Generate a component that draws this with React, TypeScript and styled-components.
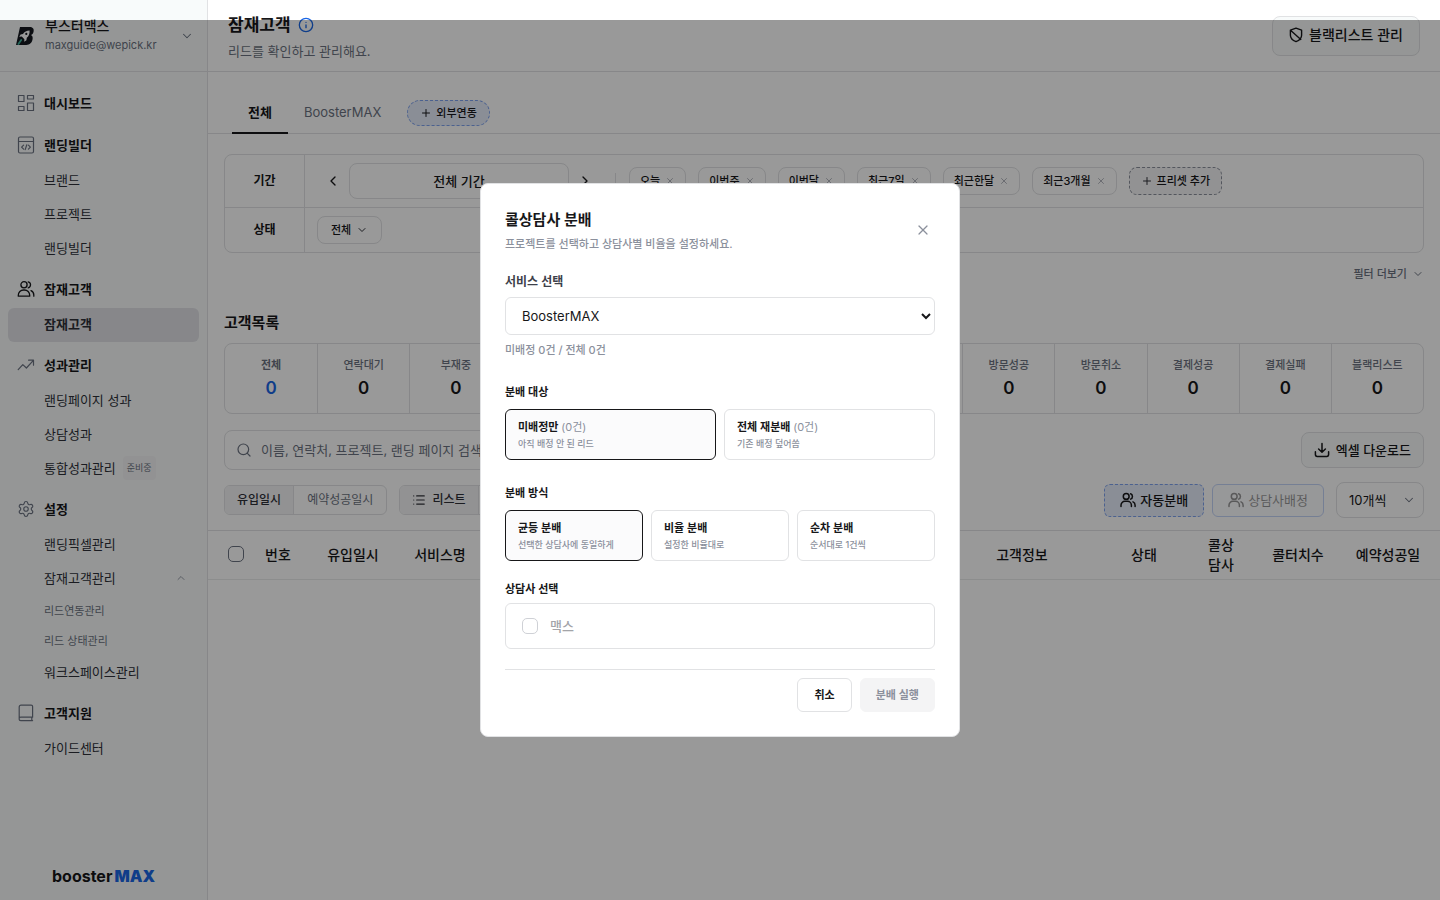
import React from "react";
import styled, { createGlobalStyle, css } from "styled-components";
import {
  ChevronDown,
  ChevronLeft,
  ChevronRight,
  ChevronUp,
  Info,
  List,
  Plus,
  Search,
  Settings,
  X,
} from "lucide-react";

const color = {
  ink: "#171719",
  text: "#2e3038",
  gray: "#6b7280",
  muted: "#8b909c",
  line: "#e1e2e4",
  lineSoft: "#eaebec",
  side: "#f8fbfb",
  active: "#e1e2e6",
  soft: "#f4f4f5",
  blue: "#1a66e5",
  blueLine: "#7ea2ee",
  blueSoft: "#e6edfb",
};

const GlobalStyle = createGlobalStyle`
  *, *::before, *::after { box-sizing: border-box; }
  body {
    margin: 0;
    background: #fff;
    color: ${color.ink};
    font-family: Inter, "Noto Sans CJK KR", sans-serif;
    font-size: 13px;
    line-height: 20px;
  }
  button, input, select { font: inherit; color: inherit; margin: 0; }
  button { cursor: pointer; }
  h1, h2, p, ul { margin: 0; padding: 0; }
  ul { list-style: none; }
  a { color: inherit; text-decoration: none; }
  svg { flex: none; }
`;

/* ---------- icons ---------- */

const iconBase = {
  fill: "none",
  stroke: "currentColor",
  strokeLinecap: "round" as const,
  strokeLinejoin: "round" as const,
  "aria-hidden": true,
};

const DashboardIcon = () => (
  <svg width="18" height="18" viewBox="0 0 18 18" {...iconBase} strokeWidth="1.2">
    <path d="M1.5 1.5H7v6H1.5zM10.5 1.5h6V5h-6zM1.5 12.500H7v4H1.5zM10.500 9h6v7.500h-6z" />
  </svg>
);

const CodeWindowIcon = () => (
  <svg width="18" height="18" viewBox="0 0 18 18" {...iconBase} strokeWidth="1.2">
    <rect x="1.5" y="1" width="15" height="16" rx="1.5" />
    <path d="M1.5 5.5h15M6.6 9.2 4.6 11.2l2 2M11.4 9.2l2 2-2 2M9.8 8.8l-1.6 4.8" />
  </svg>
);

const PeopleIcon = () => (
  <svg width="18" height="18" viewBox="0 0 18 18" {...iconBase} strokeWidth="1.3">
    <circle cx="7" cy="4.8" r="3.1" />
    <path d="M1.3 16.2v-1a5.2 5.2 0 0 1 5.2-5.2h1a5.2 5.2 0 0 1 5.2 5.2v1zM11.2 1.8a3.1 3.1 0 0 1 0 6M14 10.6c1.7.8 2.8 2.5 2.8 4.4v1.2" />
  </svg>
);

const AssignIcon = () => (
  <svg width="16" height="16" viewBox="0 0 16 16" {...iconBase} strokeWidth="1.5">
    <circle cx="6.2" cy="4.4" r="2.9" />
    <path d="M1 14.6v-1.4a3.9 3.9 0 0 1 3.9-3.9h2.6a3.9 3.9 0 0 1 3.9 3.9v1.4M10.6 1.7a2.9 2.9 0 0 1 0 5.4M13 9.9a3.6 3.6 0 0 1 2.1 3.3v1.4" />
  </svg>
);

const TrendIcon = () => (
  <svg width="18" height="18" viewBox="0 0 18 18" {...iconBase} strokeWidth="1.2">
    <path d="m1.2 13.6 4.6-5 3.6 3.4 7-7.600M11.600 4.200h4.900v5" />
  </svg>
);

const BookIcon = () => (
  <svg width="18" height="18" viewBox="0 0 18 18" {...iconBase} strokeWidth="1.2">
    <path d="M15.6 13.2V2.6a1.4 1.4 0 0 0-1.400-1.400H4A1.800 1.800 0 0 0 2.200 3v11.600M15.600 13.200H3.800a1.600 1.600 0 0 0 0 3.400h11.800M14.800 13.200v3.400" />
  </svg>
);

const ShieldOffIcon = () => (
  <svg width="14" height="16" viewBox="0 0 14 16" {...iconBase} strokeWidth="1.4">
    <path d="M7 1.2 12.6 3.2v5c0 3.2-2.4 5.2-5.6 6.4-3.2-1.2-5.6-3.2-5.6-6.4v-5zM1.8 3.4l10 9" />
  </svg>
);

const DownloadIcon = () => (
  <svg width="16" height="16" viewBox="0 0 16 16" {...iconBase} strokeWidth="1.5">
    <path d="M8 1.5v8.600M4.600 7 8 10.300 11.400 7M1.400 9.800v2.800A1.800 1.800 0 0 0 3.200 14.400h9.600a1.800 1.800 0 0 0 1.800-1.800V9.800" />
  </svg>
);

const WorkspaceMark = () => (
  <svg width="20" height="20" viewBox="0 0 20 20" aria-hidden="true">
    <path fill="#15181f" d="M5 1h9.600c3 0 4.600 1.800 4 4.400-.3 1.700-1.100 2.900-2.600 3.700 1.400.8 1.900 2.100 1.600 4C17.100 16.600 14.800 19 11.200 19H1z" />
    <path fill="#fff" d="M14.600 4.600c-3 0-5.200 1.200-6.600 3.400l-2.400.6-1.400 2.200 2.600-.2 2.600 2.600-.2 2.600 2.200-1.600.4-2.400c2-1.600 3-3.800 2.800-7.200z" />
    <circle cx="11.3" cy="7.9" r="1.1" fill="#15181f" />
    <path stroke="#3fb09a" strokeWidth="1.8" strokeLinecap="round" d="M6.200 14 3.400 18" />
  </svg>
);

/* ---------- sidebar ---------- */

const Page = styled.div`
  display: flex;
  min-height: 100vh;
`;

const Sidebar = styled.aside`
  display: flex;
  flex-direction: column;
  flex: none;
  width: 208px;
  background: ${color.side};
  border-right: 1px solid ${color.line};
`;

const Workspace = styled.button`
  display: flex;
  align-items: center;
  gap: 10px;
  height: 72px;
  padding: 0 13px 0 15px;
  border: 0;
  border-bottom: 1px solid ${color.line};
  background: none;
  text-align: left;
`;

const WorkspaceText = styled.span`
  display: flex;
  flex: 1;
  flex-direction: column;
  min-width: 0;
  padding-bottom: 2px;
`;

const WorkspaceName = styled.span`
  font-size: 14px;
  font-weight: 500;
  line-height: 20px;
`;

const WorkspaceMail = styled.span`
  font-size: 11px;
  line-height: 18px;
  color: ${color.gray};
`;

const Nav = styled.nav`
  display: flex;
  flex: 1;
  flex-direction: column;
  gap: 6px;
  padding: 14px 8px;
`;

const NavHead = styled.a<{ $on?: boolean }>`
  display: flex;
  align-items: center;
  gap: 9px;
  height: 34px;
  margin-bottom: 2px;
  padding: 0 9px;
  font-weight: 600;

  svg { color: ${(p) => (p.$on ? color.ink : color.gray)}; }
`;

const NavLink = styled.a<{ $on?: boolean; $minor?: boolean }>`
  display: flex;
  align-items: center;
  justify-content: space-between;
  height: ${(p) => (p.$minor ? 30 : 34)}px;
  padding: 0 12px ${(p) => (p.$minor ? 0 : 2)}px 36px;
  border-radius: 6px;
  color: ${(p) => (p.$minor ? color.gray : color.text)};
  font-size: ${(p) => (p.$minor ? 11 : 13)}px;
  ${(p) =>
    p.$on &&
    css`
      background: ${color.active};
      font-weight: 600;
    `}
`;

const LinkText = styled.span`
  display: flex;
  align-items: center;
  gap: 7px;
`;

const Soon = styled.span`
  padding: 2px 4px;
  border-radius: 4px;
  background: ${color.soft};
  color: ${color.gray};
  font-size: 9px;
`;

const Brand = styled.div`
  display: flex;
  justify-content: center;
  gap: 2px;
  padding-bottom: 14px;
  font-size: 16px;
  font-weight: 700;
`;

const BrandAccent = styled.span`
  color: ${color.blue};
  font-weight: 900;
`;

/* ---------- main ---------- */

const Main = styled.main`
  flex: 1;
  min-width: 0;
`;

const Header = styled.header`
  display: flex;
  align-items: flex-start;
  justify-content: space-between;
  height: 72px;
  padding: 0 20px;
  border-bottom: 1px solid ${color.line};
`;

const HeaderText = styled.div`
  padding-top: 12px;
`;

const Title = styled.h1`
  display: flex;
  align-items: center;
  gap: 7px;
  font-size: 17px;
  font-weight: 600;
  line-height: 26px;

  svg { color: ${color.blue}; }
`;

const Lead = styled.p`
  line-height: 26px;
  color: ${color.gray};
`;

const Button = styled.button<{ $tall?: boolean }>`
  display: inline-flex;
  align-items: center;
  justify-content: center;
  gap: 6px;
  height: ${(p) => (p.$tall ? 40 : 36)}px;
  padding: 0 ${(p) => (p.$tall ? 16 : 12)}px ${(p) => (p.$tall ? 2 : 0)}px;
  border: 1px solid ${color.line};
  border-radius: 8px;
  background: ${color.side};
  font-size: ${(p) => (p.$tall ? 14 : 13)}px;
  font-weight: 500;
`;

const HeaderAction = styled.div`
  padding-top: 16px;
`;

const Tabs = styled.div`
  display: flex;
  align-items: flex-end;
  height: 62px;
  padding: 0 24px;
  border-bottom: 1px solid ${color.line};
`;

const Tab = styled.button<{ $on?: boolean }>`
  height: 43px;
  margin-bottom: -1px;
  padding: 0 16px;
  border: 0;
  border-bottom: 2px solid ${(p) => (p.$on ? color.ink : "transparent")};
  background: none;
  color: ${(p) => (p.$on ? color.ink : color.gray)};
  font-size: 13px;
  font-weight: ${(p) => (p.$on ? 600 : 400)};
`;

const LinkPill = styled.button`
  display: flex;
  align-items: center;
  gap: 4px;
  height: 26px;
  margin: 0 0 7px 10px;
  padding: 0 12px;
  border: 1px dashed ${color.blueLine};
  border-radius: 13px;
  background: ${color.blueSoft};
  font-size: 11px;
  font-weight: 500;
`;

const Content = styled.div`
  padding: 20px 16px 0;
`;

const Filters = styled.div`
  border: 1px solid ${color.line};
  border-radius: 8px;
`;

const FilterRow = styled.div<{ $first?: boolean }>`
  display: flex;
  height: ${(p) => (p.$first ? 53 : 44)}px;
  border-bottom: ${(p) => (p.$first ? `1px solid ${color.line}` : "0")};
`;

const FilterName = styled.div`
  display: flex;
  align-items: center;
  justify-content: center;
  width: 80px;
  border-right: 1px solid ${color.line};
  font-size: 12px;
  font-weight: 600;
`;

const FilterBody = styled.div`
  display: flex;
  align-items: center;
  gap: 12px;
  padding: 0 12px;
`;

const Period = styled.div`
  display: flex;
  align-items: center;
`;

const Step = styled.button`
  display: grid;
  place-items: center;
  width: 32px;
  height: 32px;
  padding: 0;
  border: 0;
  background: none;
`;

const PeriodValue = styled.button`
  width: 220px;
  height: 36px;
  border: 1px solid ${color.line};
  border-radius: 8px;
  background: none;
  font-size: 13px;
  font-weight: 500;
`;

const Divider = styled.span`
  width: 1px;
  height: 16px;
  margin: 0 1px 0 2px;
  background: ${color.line};
`;

const Chip = styled.button<{ $kind?: "add" | "pick" }>`
  display: flex;
  align-items: center;
  gap: ${(p) => (p.$kind === "add" ? 4 : 5)}px;
  height: 28px;
  padding: 0 ${(p) => (p.$kind === "pick" ? 13 : p.$kind === "add" ? 11 : 10)}px;
  border: 1px solid ${color.line};
  border-radius: 8px;
  background: none;
  font-size: 11px;
  font-weight: 500;
  white-space: nowrap;
  ${(p) =>
    p.$kind === "add" &&
    css`
      border: 1px dashed ${color.muted};
      background: ${color.soft};
    `}

  svg { color: ${(p) => (p.$kind ? color.text : color.muted)}; }
`;

const More = styled.button`
  display: flex;
  align-items: center;
  gap: 5px;
  margin: 11px 0 0 auto;
  padding: 0;
  border: 0;
  background: none;
  color: ${color.gray};
  font-size: 11px;
  font-weight: 500;
`;

const ListTitle = styled.h2`
  margin: 27px 0 8px;
  font-size: 15px;
  font-weight: 600;
  line-height: 24px;
`;

const Stats = styled.ul`
  display: grid;
  grid-template-columns: repeat(13, 1fr);
  border: 1px solid ${color.line};
  border-radius: 8px;
`;

const Stat = styled.li`
  display: flex;
  flex-direction: column;
  align-items: center;
  padding: 11px 0 12px;
  border-left: 1px solid ${color.line};

  &:first-child { border-left: 0; }
`;

const StatName = styled.span<{ $on?: boolean }>`
  color: ${color.gray};
  font-size: 11px;
  font-weight: ${(p) => (p.$on ? 600 : 500)};
`;

const StatValue = styled.span<{ $on?: boolean }>`
  color: ${(p) => (p.$on ? color.blue : color.ink)};
  font-size: 17px;
  font-weight: 600;
  line-height: 26px;
`;

const SearchRow = styled.div`
  display: flex;
  align-items: center;
  justify-content: space-between;
  margin-top: 16px;
`;

const SearchBox = styled.label`
  display: flex;
  align-items: center;
  gap: 9px;
  width: 400px;
  height: 40px;
  padding: 0 11px;
  border: 1px solid ${color.line};
  border-radius: 8px;
  color: ${color.gray};
`;

const SearchInput = styled.input`
  flex: 1;
  min-width: 0;
  padding: 0;
  border: 0;
  outline: 0;
  background: none;
  font-size: 13px;

  &::placeholder { color: ${color.gray}; opacity: 1; }
`;

const ToolRow = styled.div`
  display: flex;
  align-items: center;
  justify-content: space-between;
  margin: 12px 0;
`;

const ToolGroup = styled.div<{ $gap: number }>`
  display: flex;
  align-items: center;
  gap: ${(p) => p.$gap}px;
`;

const Segment = styled.div`
  display: flex;
  height: 30px;
  overflow: hidden;
  border: 1px solid ${color.line};
  border-radius: 6px;
`;

const SegmentItem = styled.button<{ $on?: boolean }>`
  display: flex;
  align-items: center;
  gap: 6px;
  padding: 0 ${(p) => (p.$on ? 12 : 13)}px;
  border: 0;
  background: ${(p) => (p.$on ? color.soft : "none")};
  color: ${(p) => (p.$on ? color.text : color.gray)};
  font-size: 12px;
  font-weight: ${(p) => (p.$on ? 500 : 400)};

  & + & { border-left: 1px solid ${color.line}; }
`;

const AssignButton = styled.button<{ $auto?: boolean }>`
  display: flex;
  align-items: center;
  gap: 4px;
  height: 33px;
  padding: 0 15px;
  border: 1px ${(p) => (p.$auto ? "dashed" : "solid")} ${color.blueLine};
  border-radius: 6px;
  background: ${(p) => (p.$auto ? color.blueSoft : "#fafbff")};
  color: ${color.ink};
  font-size: 13px;
  font-weight: ${(p) => (p.$auto ? 500 : 400)};
  opacity: ${(p) => (p.$auto ? 1 : 0.45)};
`;

const PageSize = styled.span`
  position: relative;
  display: flex;
  align-items: center;
  margin-left: 4px;

  svg {
    position: absolute;
    right: 8px;
    color: ${color.gray};
    pointer-events: none;
  }
`;

const PageSizeSelect = styled.select`
  width: 88px;
  height: 36px;
  padding: 0 12px;
  border: 1px solid ${color.line};
  border-radius: 8px;
  appearance: none;
  background: none;
  font-size: 13px;
`;

const Table = styled.table`
  width: 100%;
  border-collapse: collapse;
  table-layout: fixed;
`;

const Th = styled.th<{ $w?: number; $kind?: "check" | "wrap" }>`
  width: ${(p) => (p.$w ? `${p.$w}px` : "auto")};
  height: 49px;
  padding: ${(p) => (p.$kind === "check" ? "0 0 3px 20px" : p.$kind === "wrap" ? "0 20px" : "0 8px")};
  border-top: 1px solid ${color.line};
  border-bottom: 1px solid ${color.lineSoft};
  font-size: 14px;
  font-weight: 500;
  line-height: 20px;
  text-align: ${(p) => (p.$kind === "check" ? "left" : "center")};
`;

const Checkbox = styled.input<{ $dark?: boolean }>`
  display: block;
  width: 16px;
  height: 16px;
  border: 1px solid ${(p) => (p.$dark ? color.gray : "#cfd1d6")};
  border-radius: 5px;
  appearance: none;
  background: #fff;

  &:checked { background: ${color.ink}; }
`;

/* ---------- dialog ---------- */

const Backdrop = styled.div`
  position: fixed;
  inset: 20px 0 0;
  display: flex;
  align-items: center;
  justify-content: center;
  background: rgba(0, 0, 0, 0.4);
`;

const Dialog = styled.form`
  width: 480px;
  padding: 24px;
  border: 1px solid ${color.line};
  border-radius: 8px;
  background: #fff;
`;

const DialogHead = styled.div`
  display: flex;
  align-items: flex-start;
  justify-content: space-between;
  margin-bottom: 18px;
`;

const DialogTitle = styled.h2`
  font-size: 15px;
  font-weight: 600;
  line-height: 24px;
`;

const Hint = styled.p`
  color: ${color.muted};
  font-size: 11px;
  font-weight: 500;
  line-height: 20px;
`;

const DialogSub = styled(Hint)`
  padding-top: 2px;
`;

const Close = styled.button`
  display: grid;
  place-items: center;
  width: 24px;
  height: 24px;
  margin-top: 10px;
  padding: 0;
  border: 0;
  background: none;
  color: ${color.muted};
`;

const FieldLabel = styled.label`
  display: block;
  margin-bottom: 5px;
  color: #3d404a;
  font-size: 12px;
  font-weight: 600;
  line-height: 20px;
`;

const ServiceSelect = styled.select`
  display: block;
  width: 100%;
  height: 38px;
  margin-bottom: 5px;
  padding: 0 0 0 12px;
  border: 1px solid ${color.line};
  border-radius: 6px;
  background: #fff;
  font-size: 13px;
`;

const Section = styled.section<{ $top: number }>`
  margin-top: ${(p) => p.$top}px;
`;

const SectionTitle = styled.h2<{ $gap: number }>`
  margin-bottom: ${(p) => p.$gap}px;
  font-size: 11px;
  font-weight: 600;
  line-height: 18px;
`;

const Options = styled.div`
  display: flex;
  gap: 8px;
`;

const Option = styled.button<{ $on?: boolean }>`
  flex: 1;
  height: 51px;
  padding: 0 12px;
  border: 1px solid ${(p) => (p.$on ? color.ink : color.line)};
  border-radius: 6px;
  background: ${(p) => (p.$on ? "#fbfbfc" : "#fff")};
  text-align: left;
`;

const OptionName = styled.span`
  display: block;
  font-size: 11px;
  font-weight: 600;
  line-height: 18px;
`;

const OptionCount = styled.span`
  color: ${color.muted};
  font-weight: 400;
`;

const OptionNote = styled.span`
  display: block;
  color: ${color.muted};
  font-size: 9px;
  font-weight: 500;
  line-height: 16px;
`;

const Agents = styled.div`
  padding: 12px 16px;
  border: 1px solid ${color.line};
  border-radius: 6px;
`;

const Agent = styled.label`
  display: flex;
  align-items: center;
  gap: 12px;
  color: #a3a4a8;
  font-weight: 500;
`;

const DialogFoot = styled.div`
  display: flex;
  justify-content: flex-end;
  gap: 8px;
  margin-top: 20px;
  padding-top: 8px;
  border-top: 1px solid ${color.line};
`;

const FootButton = styled.button<{ $fill?: boolean }>`
  height: 34px;
  padding: 0 ${(p) => (p.$fill ? 15 : 16)}px;
  border: 1px solid ${(p) => (p.$fill ? color.soft : color.line)};
  border-radius: 6px;
  background: ${(p) => (p.$fill ? color.soft : "#fff")};
  color: ${(p) => (p.$fill ? color.muted : color.ink)};
  font-size: 11px;
  font-weight: 600;
`;

/* ---------- data ---------- */

type NavGroup = {
  name: string;
  icon: React.ReactNode;
  on?: boolean;
  links: { name: string; on?: boolean; soon?: boolean; open?: boolean; minor?: boolean }[];
};

const nav: NavGroup[] = [
  { name: "대시보드", icon: <DashboardIcon />, links: [] },
  {
    name: "랜딩빌더",
    icon: <CodeWindowIcon />,
    links: [{ name: "브랜드" }, { name: "프로젝트" }, { name: "랜딩빌더" }],
  },
  { name: "잠재고객", icon: <PeopleIcon />, on: true, links: [{ name: "잠재고객", on: true }] },
  {
    name: "성과관리",
    icon: <TrendIcon />,
    links: [{ name: "랜딩페이지 성과" }, { name: "상담성과" }, { name: "통합성과관리", soon: true }],
  },
  {
    name: "설정",
    icon: <Settings size={18} strokeWidth={1.5} />,
    links: [
      { name: "랜딩픽셀관리" },
      { name: "잠재고객관리", open: true },
      { name: "리드연동관리", minor: true },
      { name: "리드 상태관리", minor: true },
      { name: "워크스페이스관리" },
    ],
  },
  { name: "고객지원", icon: <BookIcon />, links: [{ name: "가이드센터" }] },
];

const presets = ["오늘", "이번주", "이번달", "최근7일", "최근한달", "최근3개월"];

const stats = [
  "전체", "연락대기", "부재중", "", "", "", "",
  "", "방문성공", "방문취소", "결제성공", "결제실패", "블랙리스트",
];

const columns: { name: string; width?: number; wrap?: boolean }[] = [
  { name: "번호", width: 44 },
  { name: "유입일시", width: 106 },
  { name: "서비스명", width: 68 },
  { name: "" },
  { name: "고객정보", width: 168 },
  { name: "상태", width: 76 },
  { name: "콜상담사", width: 78, wrap: true },
  { name: "콜터치수", width: 76 },
  { name: "예약성공일", width: 104 },
];

const targets = [
  { name: "미배정만", count: "(0건)", note: "아직 배정 안 된 리드" },
  { name: "전체 재분배", count: "(0건)", note: "기존 배정 덮어씀" },
];

const methods = [
  { name: "균등 분배", note: "선택한 상담사에 동일하게" },
  { name: "비율 분배", note: "설정한 비율대로" },
  { name: "순차 분배", note: "순서대로 1건씩" },
];

export default function App() {
  return (
    <>
      <GlobalStyle />
      <Page>
        <Sidebar>
          <Workspace type="button">
            <WorkspaceMark />
            <WorkspaceText>
              <WorkspaceName>부스터맥스</WorkspaceName>
              <WorkspaceMail>maxguide@wepick.kr</WorkspaceMail>
            </WorkspaceText>
            <ChevronDown size={14} strokeWidth={1.8} color={color.gray} />
          </Workspace>
          <Nav>
            {nav.map((group) => (
              <div key={group.name}>
                <NavHead href="#" $on={group.on}>
                  {group.icon}
                  {group.name}
                </NavHead>
                {group.links.map((link) => (
                  <NavLink key={link.name} href="#" $on={link.on} $minor={link.minor}>
                    <LinkText>
                      {link.name}
                      {link.soon && <Soon>준비중</Soon>}
                    </LinkText>
                    {link.open && <ChevronUp size={12} strokeWidth={1.8} color={color.muted} />}
                  </NavLink>
                ))}
              </div>
            ))}
          </Nav>
          <Brand>
            <span>booster</span>
            <BrandAccent>MAX</BrandAccent>
          </Brand>
        </Sidebar>

        <Main>
          <Header>
            <HeaderText>
              <Title>
                잠재고객
                <Info size={16} strokeWidth={2} />
              </Title>
              <Lead>리드를 확인하고 관리해요.</Lead>
            </HeaderText>
            <HeaderAction>
              <Button type="button" $tall>
                <ShieldOffIcon />
                블랙리스트 관리
              </Button>
            </HeaderAction>
          </Header>

          <Tabs>
            <Tab type="button" $on>전체</Tab>
            <Tab type="button">BoosterMAX</Tab>
            <LinkPill type="button">
              <Plus size={12} strokeWidth={2} />
              외부연동
            </LinkPill>
          </Tabs>

          <Content>
            <Filters>
              <FilterRow $first>
                <FilterName>기간</FilterName>
                <FilterBody>
                  <Period>
                    <Step type="button" aria-label="이전 기간"><ChevronLeft size={16} /></Step>
                    <PeriodValue type="button">전체 기간</PeriodValue>
                    <Step type="button" aria-label="다음 기간"><ChevronRight size={16} /></Step>
                  </Period>
                  <Divider />
                  {presets.map((name) => (
                    <Chip key={name} type="button">
                      {name}
                      <X size={10} strokeWidth={1.6} />
                    </Chip>
                  ))}
                  <Chip type="button" $kind="add">
                    <Plus size={12} strokeWidth={2} />
                    프리셋 추가
                  </Chip>
                </FilterBody>
              </FilterRow>
              <FilterRow>
                <FilterName>상태</FilterName>
                <FilterBody>
                  <Chip type="button" $kind="pick">
                    전체
                    <ChevronDown size={12} />
                  </Chip>
                </FilterBody>
              </FilterRow>
            </Filters>
            <More type="button">
              필터 더보기
              <ChevronDown size={12} />
            </More>

            <ListTitle>고객목록</ListTitle>
            <Stats>
              {stats.map((name, i) => (
                <Stat key={i}>
                  {name && (
                    <>
                      <StatName $on={i === 0}>{name}</StatName>
                      <StatValue $on={i === 0}>0</StatValue>
                    </>
                  )}
                </Stat>
              ))}
            </Stats>

            <SearchRow>
              <SearchBox>
                <Search size={16} strokeWidth={1.8} />
                <SearchInput aria-label="고객 검색" placeholder="이름, 연락처, 프로젝트, 랜딩 페이지 검색" />
              </SearchBox>
              <Button type="button">
                <DownloadIcon />
                엑셀 다운로드
              </Button>
            </SearchRow>

            <ToolRow>
              <ToolGroup $gap={12}>
                <Segment>
                  <SegmentItem type="button" $on>유입일시</SegmentItem>
                  <SegmentItem type="button">예약성공일시</SegmentItem>
                </Segment>
                <Segment>
                  <SegmentItem type="button" $on>
                    <List size={14} strokeWidth={2} />
                    리스트
                  </SegmentItem>
                  <SegmentItem type="button" aria-label="보드" />
                </Segment>
              </ToolGroup>
              <ToolGroup $gap={8}>
                <AssignButton type="button" $auto>
                  <AssignIcon />
                  자동분배
                </AssignButton>
                <AssignButton type="button" disabled>
                  <AssignIcon />
                  상담사배정
                </AssignButton>
                <PageSize>
                  <PageSizeSelect aria-label="페이지당 개수">
                    <option>10개씩</option>
                  </PageSizeSelect>
                  <ChevronDown size={14} strokeWidth={1.8} />
                </PageSize>
              </ToolGroup>
            </ToolRow>
          </Content>

          <Table>
            <thead>
              <tr>
                <Th $w={48} $kind="check">
                  <Checkbox type="checkbox" aria-label="전체 선택" $dark />
                </Th>
                {columns.map((col) => (
                  <Th key={col.name} $w={col.width} $kind={col.wrap ? "wrap" : undefined}>
                    {col.name}
                  </Th>
                ))}
              </tr>
            </thead>
          </Table>
        </Main>
      </Page>

      <Backdrop>
        <Dialog role="dialog" aria-labelledby="dialog-title">
          <DialogHead>
            <div>
              <DialogTitle id="dialog-title">콜상담사 분배</DialogTitle>
              <DialogSub>프로젝트를 선택하고 상담사별 비율을 설정하세요.</DialogSub>
            </div>
            <Close type="button" aria-label="닫기"><X size={16} strokeWidth={1.8} /></Close>
          </DialogHead>

          <FieldLabel htmlFor="service">서비스 선택</FieldLabel>
          <ServiceSelect id="service">
            <option>BoosterMAX</option>
          </ServiceSelect>
          <Hint>미배정 0건 / 전체 0건</Hint>

          <Section $top={23}>
            <SectionTitle $gap={8}>분배 대상</SectionTitle>
            <Options>
              {targets.map((item, i) => (
                <Option key={item.name} type="button" $on={i === 0} aria-pressed={i === 0}>
                  <OptionName>
                    {item.name} <OptionCount>{item.count}</OptionCount>
                  </OptionName>
                  <OptionNote>{item.note}</OptionNote>
                </Option>
              ))}
            </Options>
          </Section>

          <Section $top={24}>
            <SectionTitle $gap={8}>분배 방식</SectionTitle>
            <Options>
              {methods.map((item, i) => (
                <Option key={item.name} type="button" $on={i === 0} aria-pressed={i === 0}>
                  <OptionName>{item.name}</OptionName>
                  <OptionNote>{item.note}</OptionNote>
                </Option>
              ))}
            </Options>
          </Section>

          <Section $top={19}>
            <SectionTitle $gap={5}>상담사 선택</SectionTitle>
            <Agents>
              <Agent>
                <Checkbox type="checkbox" />
                맥스
              </Agent>
            </Agents>
          </Section>

          <DialogFoot>
            <FootButton type="button">취소</FootButton>
            <FootButton type="submit" $fill disabled>분배 실행</FootButton>
          </DialogFoot>
        </Dialog>
      </Backdrop>
    </>
  );
}
